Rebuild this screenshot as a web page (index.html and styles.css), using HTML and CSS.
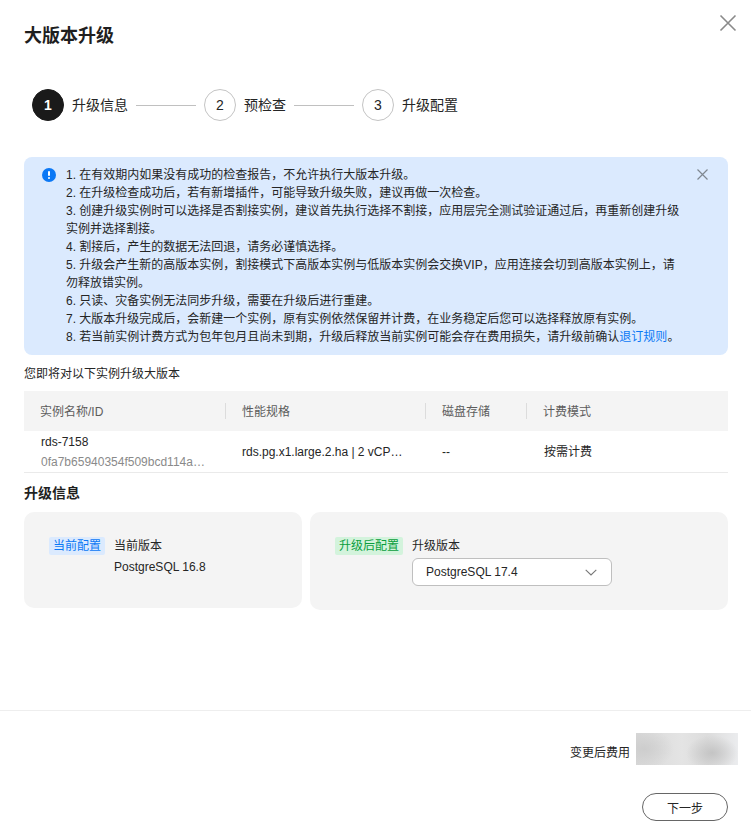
FILE: index.html
```html
<!DOCTYPE html>
<html lang="zh-CN">
<head>
<meta charset="utf-8">
<title>大版本升级</title>
<link rel="stylesheet" href="styles.css">
</head>
<body>
<div class="dialog">
  <button class="dialog-close" aria-label="关闭">
    <svg width="18" height="18" viewBox="0 0 18 18"><path d="M1.5 1.5 16.5 16.5M16.5 1.5 1.5 16.5" fill="none" stroke="#8a8a8a" stroke-width="1.6"/></svg>
  </button>
  <h1 class="title">大版本升级</h1>
  <div class="steps">
    <span class="step-num active">1</span><span class="step-label">升级信息</span><span class="step-line"></span>
    <span class="step-num">2</span><span class="step-label">预检查</span><span class="step-line"></span>
    <span class="step-num">3</span><span class="step-label">升级配置</span>
  </div>
  <div class="alert">
    <svg class="alert-icon" width="14" height="14" viewBox="0 0 14 14"><circle cx="7" cy="7" r="7" fill="#0b78f5"/><rect x="6" y="3" width="2" height="5" rx="1" fill="#fff"/><rect x="6" y="9" width="2" height="2" rx="1" fill="#fff"/></svg>
    <div class="alert-text">
      <div>1. 在有效期内如果没有成功的检查报告，不允许执行大版本升级。</div>
      <div>2. 在升级检查成功后，若有新增插件，可能导致升级失败，建议再做一次检查。</div>
      <div>3. 创建升级实例时可以选择是否割接实例，建议首先执行选择不割接，应用层完全测试验证通过后，再重新创建升级<br>实例并选择割接。</div>
      <div>4. 割接后，产生的数据无法回退，请务必谨慎选择。</div>
      <div>5. 升级会产生新的高版本实例，割接模式下高版本实例与低版本实例会交换VIP，应用连接会切到高版本实例上，请<br>勿释放错实例。</div>
      <div>6. 只读、灾备实例无法同步升级，需要在升级后进行重建。</div>
      <div>7. 大版本升级完成后，会新建一个实例，原有实例依然保留并计费，在业务稳定后您可以选择释放原有实例。</div>
      <div>8. 若当前实例计费方式为包年包月且尚未到期，升级后释放当前实例可能会存在费用损失，请升级前确认<a class="link" href="#">退订规则</a>。</div>
    </div>
    <svg class="alert-close" width="11" height="11" viewBox="0 0 11 11"><path d="M.5.5 10.5 10.5M10.5.5.5 10.5" fill="none" stroke="#7f8790" stroke-width="1.2"/></svg>
  </div>
  <p class="intro">您即将对以下实例升级大版本</p>
  <div class="table">
    <div class="thead">
      <div class="th">实例名称/ID</div>
      <div class="th divided">性能规格</div>
      <div class="th divided">磁盘存储</div>
      <div class="th divided">计费模式</div>
    </div>
    <div class="tbody">
      <div class="td name-cell">
        <div class="name">rds-7158</div>
        <div class="id">0fa7b65940354f509bcd114a…</div>
      </div>
      <div class="td spec">rds.pg.x1.large.2.ha | 2 vCP…</div>
      <div class="td">--</div>
      <div class="td billing">按需计费</div>
    </div>
  </div>
  <h2 class="section-title">升级信息</h2>
  <div class="cards">
    <div class="card card-current">
      <span class="tag tag-blue">当前配置</span>
      <div class="card-body">
        <div class="field-label">当前版本</div>
        <div class="field-value">PostgreSQL 16.8</div>
      </div>
    </div>
    <div class="card card-target">
      <span class="tag tag-green">升级后配置</span>
      <div class="card-body">
        <div class="field-label">升级版本</div>
        <div class="select">
          <span>PostgreSQL 17.4</span>
          <svg width="12" height="7" viewBox="0 0 12 7"><path d="M.7.8 6 6 11.3.8" fill="none" stroke="#777" stroke-width="1.1"/></svg>
        </div>
      </div>
    </div>
  </div>
  <div class="footer">
    <div class="price-row">
      <span class="price-label">变更后费用</span>
      <span class="price-blur"></span>
    </div>
    <button class="next">下一步</button>
  </div>
</div>
</body>
</html>
```

FILE: styles.css
```css
* { box-sizing: border-box; }
html, body { margin: 0; padding: 0; background: #fff; }
body {
  font-family: "Liberation Sans", "Noto Sans CJK SC", sans-serif;
  font-size: 12px;
  color: #252525;
}
.dialog {
  position: relative;
  width: 751px;
  height: 832px;
  padding: 23px 23px 0 24px;
  display: flex;
  flex-direction: column;
  overflow: hidden;
}
.dialog-close {
  position: absolute;
  top: 14px;
  right: 14px;
  padding: 0;
  border: 0;
  background: none;
  line-height: 0;
}
.title {
  margin: 0;
  font-size: 18px;
  line-height: 26px;
  font-weight: 700;
  color: #1f1f1f;
}
.steps {
  margin: 40px 0 0 8px;
  height: 32px;
  display: flex;
  align-items: center;
}
.step-num {
  width: 32px;
  height: 32px;
  border-radius: 50%;
  border: 1px solid #c4c4c4;
  display: flex;
  align-items: center;
  justify-content: center;
  font-size: 14px;
  color: #252525;
}
.step-num.active {
  background: #1a1a1a;
  border-color: #1a1a1a;
  color: #fff;
  font-weight: 700;
}
.step-label {
  margin-left: 8px;
  font-size: 14px;
  line-height: 20px;
  color: #252525;
}
.step-line {
  width: 60px;
  height: 1px;
  margin: 0 8px;
  background: #c0c0c0;
}
.alert {
  margin-top: 36px;
  height: 198px;
  padding: 9px 20px 0 18px;
  background: #dbeafe;
  border-radius: 8px;
  display: flex;
  align-items: flex-start;
}
.alert-icon { margin: 2px 10px 0 0; flex: none; }
.alert-text {
  flex: 1;
  line-height: 18px;
  color: #252525;
  white-space: nowrap;
}
.alert-close { flex: none; margin-top: 3px; }
.link { color: #0b78f5; text-decoration: none; }
.intro {
  margin: 10px 0 8px;
  line-height: 18px;
  color: #252525;
}
.thead, .tbody {
  display: grid;
  grid-template-columns: 201px 200px 101px 202px;
}
.thead {
  height: 40px;
  background: #f4f4f4;
  align-items: center;
}
.th {
  height: 16px;
  line-height: 18px;
  padding-left: 16px;
  color: #5c5c5c;
}
.th.divided { border-left: 1px solid #dcdcdc; }
.tbody {
  height: 42px;
  border-bottom: 1px solid #eaeaea;
  align-items: center;
}
.td { padding-left: 17px; line-height: 18px; }
.td.billing { padding-left: 18px; }
.spec {
  overflow: hidden;
  text-overflow: ellipsis;
  white-space: nowrap;
}
.name { line-height: 20px; }
.id { line-height: 20px; color: #8a8a8a; }
.section-title {
  margin: 10px 0 9px;
  font-size: 14px;
  line-height: 20px;
  font-weight: 700;
  color: #1f1f1f;
}
.cards {
  display: flex;
  gap: 8px;
  align-items: flex-start;
}
.card {
  background: #f4f4f4;
  border-radius: 10px;
  padding: 23px 0 0 25px;
  display: flex;
  align-items: flex-start;
  gap: 9px;
}
.card-current { width: 278px; height: 96px; }
.card-target { width: 418px; height: 98px; }
.tag {
  height: 18px;
  padding: 0 4px;
  margin-top: 2px;
  line-height: 19px;
  border-radius: 2px;
  white-space: nowrap;
}
.tag-blue { background: #dbeafe; color: #0b78f5; }
.tag-green { background: #d3f3dc; color: #0a9e3c; }
.field-label { line-height: 20px; padding-top: 1px; }
.field-value { margin-top: 1px; line-height: 20px; }
.select {
  width: 200px;
  height: 28px;
  margin-top: 2px;
  padding: 0 14px 0 13px;
  background: #fff;
  border: 1px solid #bfbfbf;
  border-radius: 6px;
  display: flex;
  align-items: center;
  justify-content: space-between;
}
.footer {
  margin: auto -23px 0 -24px;
  height: 122px;
  border-top: 1px solid #eeeeee;
  padding: 22px 13px 0 0;
  display: flex;
  flex-direction: column;
  align-items: flex-end;
}
.price-row {
  display: flex;
  align-items: flex-start;
  gap: 6px;
}
.price-label { line-height: 18px; margin-top: 11px; color: #252525; }
.price-blur {
  width: 102px;
  height: 32px;
  background:
    radial-gradient(ellipse 26px 18px at 76px 20px, #c4c4c4, rgba(196,196,196,0)),
    radial-gradient(ellipse 30px 20px at 8px 16px, #cdcdcd, rgba(205,205,205,0)),
    linear-gradient(90deg, #d8d8d8, #e4e4e4 45%, #dcdcdc 70%, #ebecee);
}
.next {
  width: 86px;
  height: 28px;
  margin: 28px 10px 0 0;
  border: 1px solid #666;
  border-radius: 14px;
  background: #fff;
  font: inherit;
  color: #252525;
  padding: 0;
}
```
